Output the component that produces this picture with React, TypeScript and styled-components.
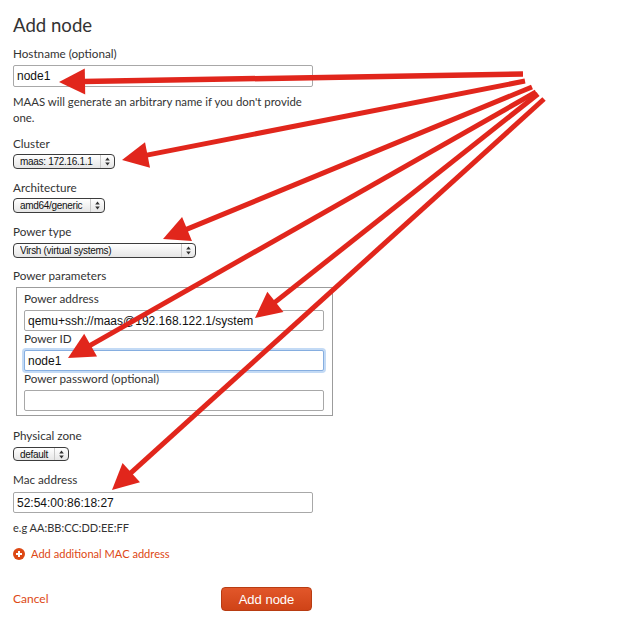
import React from "react";
import styled, { createGlobalStyle, css } from "styled-components";

const Global = createGlobalStyle`
  html, body { margin: 0; padding: 0; background: #fff; }
  body { font-family: Lato, "Noto Sans", sans-serif; color: #333; }
`;

const Page = styled.div`
  position: relative;
  width: 625px;
  height: 629px;
  overflow: hidden;
`;

const Form = styled.form`
  display: flex;
  flex-direction: column;
  align-items: flex-start;
  padding: 14px 0 0 13px;
  width: 300px;
`;

const Title = styled.h1`
  margin: 0;
  font-size: 18.6px;
  line-height: 23px;
  font-weight: 400;
  color: #333;
`;

const Label = styled.label<{ $mt: number; $lh?: number }>`
  display: block;
  margin-top: ${(p) => p.$mt}px;
  font-size: 11.7px;
  line-height: ${(p) => p.$lh ?? 16}px;
  color: #333;
`;

const Help = styled.p<{ $mt: number }>`
  margin: ${(p) => p.$mt}px 0 0;
  font-size: 11.4px;
  line-height: 16px;
  color: #333;
  width: 300px;
`;

const Hint = styled.p<{ $mt: number }>`
  margin: ${(p) => p.$mt}px 0 0;
  font-size: 11px;
  line-height: 16px;
  color: #333;
`;

const TextInput = styled.input<{ $w: number; $h: number; $mt: number; $focus?: boolean }>`
  box-sizing: border-box;
  width: ${(p) => p.$w}px;
  height: ${(p) => p.$h}px;
  margin: ${(p) => p.$mt}px 0 0;
  padding: 0 3px;
  border: 1px solid #a8a8a8;
  border-radius: 2px;
  background: #fff;
  font-family: "Liberation Sans", Arial, sans-serif;
  font-size: 12px;
  color: #111;
  outline: none;
  ${(p) =>
    p.$focus &&
    css`
      border-color: #86aee0;
      box-shadow: 0 0 0 2px #c3daf5;
    `}
`;

const SelectWrap = styled.div<{ $w: number; $h: number; $mt: number }>`
  display: flex;
  box-sizing: border-box;
  width: ${(p) => p.$w}px;
  height: ${(p) => p.$h}px;
  margin-top: ${(p) => p.$mt}px;
  border: 1px solid #3c3c3c;
  border-radius: 4px;
  background: linear-gradient(#ffffff, #e6e6e6);
  overflow: hidden;
`;

const SelectField = styled.select`
  appearance: none;
  -webkit-appearance: none;
  flex: 1;
  min-width: 0;
  height: 100%;
  margin: 0;
  padding: 0 0 0 6px;
  border: 0;
  background: transparent;
  font-family: "Liberation Sans", Arial, sans-serif;
  font-size: 10px;
  letter-spacing: -0.3px;
  color: #111;
  outline: none;
`;

const SelectArrow = styled.span`
  width: 13px;
  flex: none;
  border-left: 1px solid #c8c8c8;
  display: flex;
  align-items: center;
  justify-content: center;
`;

const ParamsBox = styled.div`
  box-sizing: border-box;
  display: flex;
  flex-direction: column;
  align-items: flex-start;
  width: 317px;
  margin: 4px 0 0 3px;
  padding: 3px 7px 4px;
  border: 1px solid #9c9c9c;
`;

const AddLink = styled.a`
  display: flex;
  align-items: center;
  gap: 6px;
  margin-top: 10px;
  font-size: 11.1px;
  line-height: 16px;
  color: #dd4814;
  text-decoration: none;
`;

const Actions = styled.div`
  display: flex;
  align-items: center;
  justify-content: space-between;
  width: 299px;
  margin-top: 25px;
`;

const CancelLink = styled.a`
  margin-bottom: 1px;
  font-size: 12px;
  color: #dd4814;
  text-decoration: none;
`;

const SubmitButton = styled.button`
  box-sizing: border-box;
  width: 91px;
  height: 24px;
  padding: 0;
  border: 1px solid #b83c12;
  border-radius: 4px;
  background: linear-gradient(#e2572a, #cf4317);
  color: #fff;
  font-family: "Liberation Sans", Arial, sans-serif;
  font-size: 13px;
`;

const Overlay = styled.svg`
  position: absolute;
  top: 0;
  left: 0;
  pointer-events: none;
`;

const UpDown = () => (
  <svg width="5" height="9" viewBox="0 0 5 9">
    <path d="M2.5 0.5 L4.8 3.6 L0.2 3.6 Z M2.5 8.5 L4.8 5.4 L0.2 5.4 Z" fill="#333" />
  </svg>
);

const MacSelect = ({ w, h, mt, value }: { w: number; h: number; mt: number; value: string }) => (
  <SelectWrap $w={w} $h={h} $mt={mt}>
    <SelectField defaultValue={value}>
      <option>{value}</option>
    </SelectField>
    <SelectArrow>
      <UpDown />
    </SelectArrow>
  </SelectWrap>
);

type Arrow = { sx: number; sy: number; tx: number; ty: number; sw: number };

const arrows: Arrow[] = [
  { sx: 523, sy: 74, tx: 59, ty: 82, sw: 5.5 },
  { sx: 525, sy: 81, tx: 122, ty: 160, sw: 5 },
  { sx: 532, sy: 87, tx: 163, ty: 239, sw: 5 },
  { sx: 536, sy: 92, tx: 68, ty: 358, sw: 5 },
  { sx: 538, sy: 94, tx: 255, ty: 318, sw: 5 },
  { sx: 544, sy: 99, tx: 112, ty: 490, sw: 5 },
];

const RED = "#e1261c";

const ArrowShape = ({ a }: { a: Arrow }) => {
  const dx = a.tx - a.sx;
  const dy = a.ty - a.sy;
  const len = Math.hypot(dx, dy);
  const ux = dx / len;
  const uy = dy / len;
  const headLen = 26;
  const half = 13;
  const bx = a.tx - ux * headLen;
  const by = a.ty - uy * headLen;
  const nx = -uy;
  const ny = ux;
  const pts = `${a.tx},${a.ty} ${bx + nx * half},${by + ny * half} ${bx - nx * half},${by - ny * half}`;
  return (
    <g>
      <line x1={a.sx} y1={a.sy} x2={bx + ux * 2} y2={by + uy * 2} stroke={RED} strokeWidth={a.sw} />
      <polygon points={pts} fill={RED} />
    </g>
  );
};

export default function App() {
  return (
    <Page>
      <Global />
      <Form onSubmit={(e) => e.preventDefault()}>
        <Title>Add node</Title>
        <Label $mt={8}>Hostname (optional)</Label>
        <TextInput $w={300} $h={22} $mt={4} defaultValue="node1" />
        <Help $mt={7}>MAAS will generate an arbitrary name if you don't provide one.</Help>

        <Label $mt={9}>Cluster</Label>
        <MacSelect w={102} h={15} mt={3} value="maas: 172.16.1.1" />

        <Label $mt={10}>Architecture</Label>
        <MacSelect w={92} h={15} mt={3} value="amd64/generic" />

        <Label $mt={10}>Power type</Label>
        <MacSelect w={183} h={15} mt={4} value="Virsh (virtual systems)" />

        <Label $mt={9}>Power parameters</Label>
        <ParamsBox>
          <Label $mt={0} $lh={14}>Power address</Label>
          <TextInput $w={300} $h={21} $mt={5} defaultValue="qemu+ssh://maas@192.168.122.1/system" />
          <Label $mt={0} $lh={14}>Power ID</Label>
          <TextInput $w={300} $h={21} $mt={5} $focus defaultValue="node1" />
          <Label $mt={0} $lh={14}>Power password (optional)</Label>
          <TextInput $w={300} $h={21} $mt={5} defaultValue="" />
        </ParamsBox>

        <Label $mt={11}>Physical zone</Label>
        <MacSelect w={56} h={14} mt={4} value="default" />

        <Label $mt={10}>Mac address</Label>
        <TextInput $w={300} $h={21} $mt={5} defaultValue="52:54:00:86:18:27" />
        <Hint $mt={7}>e.g AA:BB:CC:DD:EE:FF</Hint>

        <AddLink href="#">
          <svg width="12" height="12" viewBox="0 0 12 12">
            <circle cx="6" cy="6" r="6" fill="#dd4814" />
            <path d="M6 3 V9 M3 6 H9" stroke="#fff" strokeWidth="2" />
          </svg>
          Add additional MAC address
        </AddLink>

        <Actions>
          <CancelLink href="#">Cancel</CancelLink>
          <SubmitButton type="submit">Add node</SubmitButton>
        </Actions>
      </Form>

      <Overlay width="625" height="629" viewBox="0 0 625 629">
        {arrows.map((a, i) => (
          <ArrowShape key={i} a={a} />
        ))}
      </Overlay>
    </Page>
  );
}
